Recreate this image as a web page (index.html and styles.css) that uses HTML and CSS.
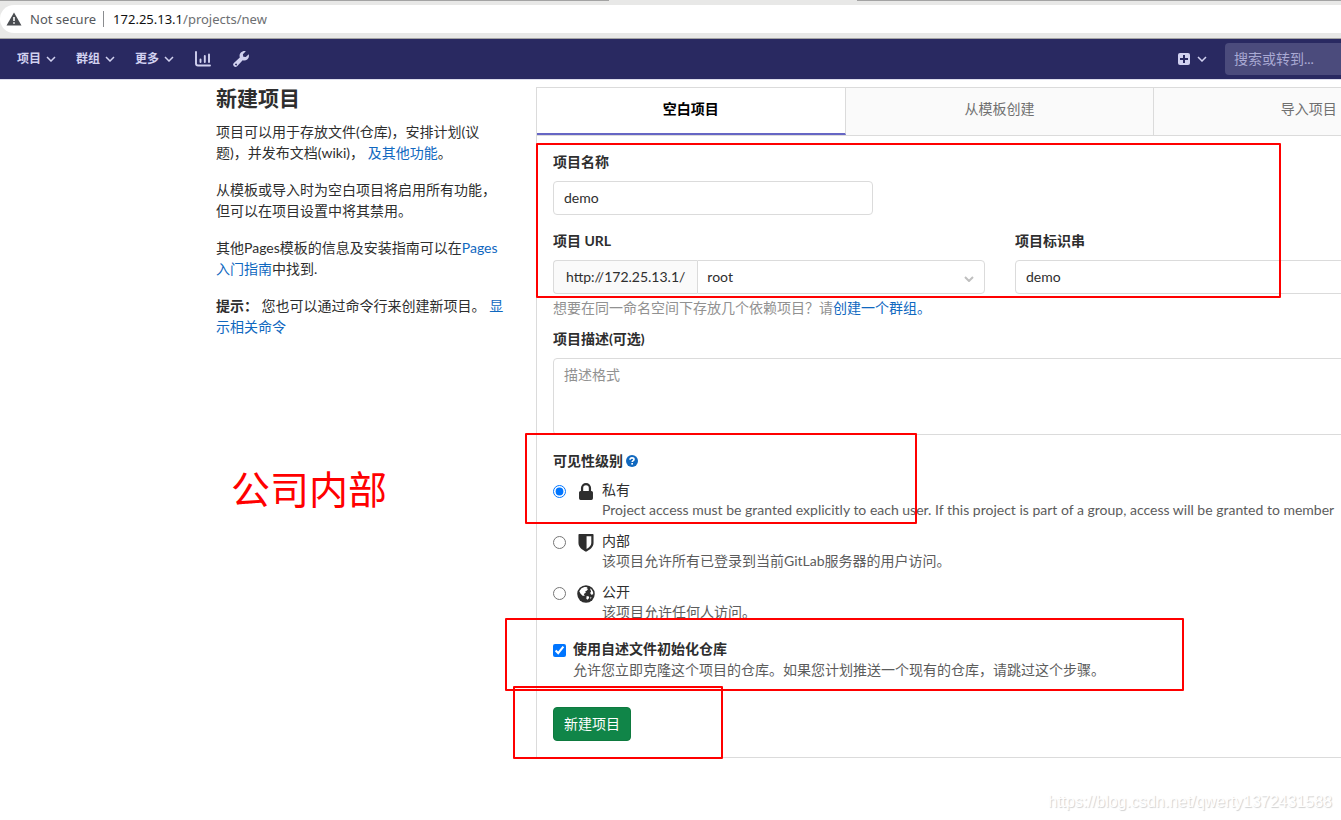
FILE: index.html
```html
<!DOCTYPE html>
<html lang="zh-CN">
<head>
<meta charset="utf-8">
<title>新建项目</title>
<link rel="stylesheet" href="styles.css">
</head>
<body>
<div class="browser-bar">
  <div class="tab-line"><span class="tab-edge tab-edge-left"></span><span class="tab-edge tab-edge-right"></span></div>
  <div class="address">
    <svg class="warn-icon" viewBox="0 0 16 14" aria-hidden="true"><path d="M8 0.5 15.5 13.5H0.5Z" fill="#4a4d51"/><path d="M7.2 5h1.6v4H7.2zM7.2 10.2h1.6v1.6H7.2z" fill="#fff"/></svg>
    <span class="not-secure">Not secure</span>
    <span class="address-sep"></span>
    <span class="url"><span class="url-host">172.25.13.1</span>/projects/new</span>
  </div>
</div>

<header class="navbar">
  <nav class="nav-left">
    <button class="nav-item" type="button">项目<svg class="chevron" viewBox="0 0 10 6" aria-hidden="true"><path d="M1 1l4 4 4-4"/></svg></button>
    <button class="nav-item" type="button">群组<svg class="chevron" viewBox="0 0 10 6" aria-hidden="true"><path d="M1 1l4 4 4-4"/></svg></button>
    <button class="nav-item" type="button">更多<svg class="chevron" viewBox="0 0 10 6" aria-hidden="true"><path d="M1 1l4 4 4-4"/></svg></button>
    <a class="nav-icon" href="#" aria-label="统计"><svg viewBox="0 0 16 16"><path d="M1 1v11.500a2 2 0 0 0 2 2H15M5.500 8.500v2.500M9.800 5v6M14 3.500v7.500" fill="none" stroke="currentColor" stroke-width="1.900" stroke-linecap="round"/></svg></a>
    <a class="nav-icon" href="#" aria-label="管理"><svg viewBox="0 0 16 16"><path fill="currentColor" fill-rule="evenodd" d="M12.800 0.300 9.900 3.200l.4 2.500 2.500.4L15.700 3.200c.7 2.200-.1 4.300-1.500 5.400-1.300 1-3 1.200-4.500.7l-5.600 5.900a2.200 2.200 0 0 1-3.200-3.200l5.900-5.600C6.200 4.500 6.700 2.700 7.900 1.600 9.200.3 11.100-.3 12.800.3zM2.500 12.700a.9.9 0 1 0 1.300 1.200.9.9 0 0 0-1.300-1.200z"/></svg></a>
  </nav>
  <div class="nav-right">
    <button class="nav-item" type="button" aria-label="新建"><svg class="plus" viewBox="0 0 12 12" aria-hidden="true"><rect width="12" height="12" rx="2" fill="#d1d1f0"/><path d="M6 2v8M2 6h8" stroke="#292961" stroke-width="2"/></svg><svg class="chevron" viewBox="0 0 10 6" aria-hidden="true"><path d="M1 1l4 4 4-4"/></svg></button>
    <input class="search" type="search" placeholder="搜索或转到..." aria-label="搜索或转到">
  </div>
</header>

<main class="page">
  <aside class="intro">
    <h1>新建项目</h1>
    <p>项目可以用于存放文件(仓库)，安排计划(议题)，并发布文档(wiki)， <a href="#">及其他功能</a>。</p>
    <p>从模板或导入时为空白项目将启用所有功能，但可以在项目设置中将其禁用。</p>
    <p>其他Pages模板的信息及安装指南可以在<a href="#">Pages入门指南</a>中找到.</p>
    <p><strong>提示：</strong> 您也可以通过命令行来创建新项目。 <a href="#">显示相关命令</a></p>
  </aside>

  <section class="panel">
    <div class="tabs" role="tablist">
      <button class="tab active" type="button" role="tab" aria-selected="true">空白项目</button>
      <button class="tab" type="button" role="tab" aria-selected="false">从模板创建</button>
      <button class="tab" type="button" role="tab" aria-selected="false">导入项目</button>
    </div>
    <form class="form">
      <div class="field">
        <label for="name">项目名称</label>
        <input class="control name-input" id="name" type="text" value="demo">
      </div>
      <div class="row">
        <div class="field">
          <label for="namespace">项目 URL</label>
          <div class="url-group">
            <span class="prefix">http://172.25.13.1/</span>
            <select class="control namespace" id="namespace"><option>root</option></select>
            <svg class="select-chevron" viewBox="0 0 10 6" aria-hidden="true"><path d="M1 1l4 4 4-4"/></svg>
          </div>
        </div>
        <div class="field">
          <label for="slug">项目标识串</label>
          <input class="control" id="slug" type="text" value="demo">
        </div>
      </div>
      <p class="hint">想要在同一命名空间下存放几个依赖项目？请<a href="#">创建一个群组。</a></p>
      <div class="field">
        <label for="desc">项目描述(可选)</label>
        <textarea class="control description" id="desc" placeholder="描述格式"></textarea>
      </div>
      <fieldset class="visibility">
        <legend>可见性级别 <a class="help" href="#" aria-label="帮助"><svg viewBox="0 0 12 12"><circle cx="6" cy="6" r="6" fill="#1068bf"/><path d="M4 4.700C4.100 3.300 5 2.900 6 2.900c1.200 0 2 .7 2 1.600C8 5.700 6.200 5.700 6.200 7.100" fill="none" stroke="#fff" stroke-width="1.600"/><rect x="5.300" y="8" width="1.700" height="1.600" fill="#fff"/></svg></a></legend>
        <div class="option">
          <input type="radio" name="visibility" id="private" checked>
          <svg class="option-icon" viewBox="0 0 16 16" aria-hidden="true"><path fill="#2e2e2e" fill-rule="evenodd" d="M3.500 7V4.500a4.500 4.500 0 0 1 9 0V7h.3A1.400 1.400 0 0 1 14.200 8.400v5.200a1.400 1.400 0 0 1-1.400 1.400H3.200A1.400 1.400 0 0 1 1.800 13.600V8.400A1.400 1.400 0 0 1 3.200 7zm2 0h5V4.500a2.500 2.500 0 0 0-5 0z"/></svg>
          <div><label for="private">私有</label><p>Project access must be granted explicitly to each user. If this project is part of a group, access will be granted to member</p></div>
        </div>
        <div class="option">
          <input type="radio" name="visibility" id="internal">
          <svg class="option-icon" viewBox="0 0 16 16" aria-hidden="true"><path fill="#2e2e2e" fill-rule="evenodd" d="M2 0h12a.7.7 0 0 1 .7.7V8c0 3.800-3.200 5.900-6.700 7.700C4.500 13.900 1.300 11.800 1.300 8V.7A.7.7 0 0 1 2 0zM8.500 2v11.300c2.500-1.500 4.200-3 4.200-5.300V2z"/></svg>
          <div><label for="internal">内部</label><p>该项目允许所有已登录到当前GitLab服务器的用户访问。</p></div>
        </div>
        <div class="option">
          <input type="radio" name="visibility" id="public">
          <svg class="option-icon" viewBox="0 0 16 16" aria-hidden="true"><circle cx="8" cy="8" r="7.800" fill="#2e2e2e"/><path fill="#fff" d="M2 5.500 4 2.900 6.600 1.800 9.500 1.700 8.400 2.600 9.800 3.600 8.600 5.200 7.400 5.600 7.800 6.800 6 8 6.900 9.600 5 9.600 3.200 7.800ZM11.500 2.800 13 3.900 14.300 6.300 14.400 8.300 12.700 8.600 11.700 7.200 12.500 5.700ZM8.600 9.800 10.600 10.200 10.800 11.600 9.300 13.200 8.300 12.300ZM12 10.500 12.900 11 11.900 12.600Z"/></svg>
          <div><label for="public">公开</label><p>该项目允许任何人访问。</p></div>
        </div>
      </fieldset>
      <div class="readme">
        <input type="checkbox" id="readme" checked>
        <div><label for="readme">使用自述文件初始化仓库</label><p>允许您立即克隆这个项目的仓库。如果您计划推送一个现有的仓库，请跳过这个步骤。</p></div>
      </div>
      <button class="submit" type="submit">新建项目</button>
    </form>
  </section>
</main>

<div class="mark mark-fields"></div>
<div class="mark mark-visibility"></div>
<div class="mark mark-readme"></div>
<div class="mark mark-submit"></div>
<div class="note">公司内部</div>
<div class="watermark">https://blog.csdn.net/qwerty1372431588</div>
</body>
</html>
```

FILE: styles.css
```css
* { box-sizing: border-box; }

body {
  position: relative;
  margin: 0;
  min-height: 100vh;
  overflow: hidden;
  background: #fff;
  color: #2e2e2e;
  font: 14px/21px Lato, "Noto Sans CJK SC", sans-serif;
}

h1, p { margin: 0; }
a { color: #1068bf; text-decoration: none; }
button, input, select, textarea { font: inherit; color: inherit; }

.browser-bar {
  background: #e8e8e7;
  border-bottom: 1px solid #a3a3a3;
  padding-bottom: 5px;
}
.tab-line { display: flex; justify-content: space-between; height: 5px; }
.tab-edge { height: 1px; background: #a3a3a3; }
.tab-edge-left { width: 609px; }
.tab-edge-right { width: 484px; }
.address {
  display: flex;
  align-items: center;
  height: 28px;
  padding-left: 6px;
  background: #fff;
  border-radius: 14px 0 0 14px;
  font-family: "Noto Sans", sans-serif;
  font-size: 13px;
  color: #6d6f72;
}
.warn-icon { width: 16px; height: 14px; }
.not-secure { margin-left: 8px; color: #55585c; }
.address-sep { width: 1px; height: 16px; margin: 0 9px 0 7px; background: #8a8c8f; }
.url-host { color: #111; }

.navbar {
  display: flex;
  justify-content: space-between;
  align-items: center;
  height: 40px;
  background: #292961;
  color: #d1d1f0;
  overflow: hidden;
}
.nav-left, .nav-right { display: flex; align-items: center; }
.nav-left { padding-left: 17px; gap: 20px; }
.nav-item {
  display: flex;
  align-items: center;
  gap: 5px;
  padding: 0;
  border: 0;
  background: none;
  font-size: 12px;
  font-weight: 700;
  line-height: 20px;
}
.chevron, .select-chevron { width: 10px; height: 6px; fill: none; stroke: currentColor; stroke-width: 2; }
.chevron { stroke-width: 1.5; }
.nav-icon { display: flex; color: #d1d1f0; }
.nav-icon svg { width: 18px; height: 16px; }
.nav-right { gap: 18px; }
.nav-right .nav-item { gap: 7px; }
.plus { width: 12px; height: 12px; }
.search {
  width: 116px;
  height: 32px;
  padding: 0 9px 2px;
  border: 0;
  border-radius: 4px 0 0 4px;
  background: #4b4b7c;
}
.search::placeholder { color: #a9a9d3; }

.page {
  display: grid;
  grid-template-columns: 290px minmax(928px, 1fr);
  gap: 30px;
  padding: 7px 0 0 216px;
  border-top: 1px solid #dcdcec;
}
.intro h1 { padding-bottom: 12px; font-size: 21px; line-height: 22px; }
.intro p { margin-bottom: 16px; }

.panel { border: 1px solid #dbdbdb; }
.tabs { display: grid; grid-template-columns: repeat(3, 1fr); border-bottom: 1px solid #dbdbdb; }
.tab {
  height: 47px;
  padding: 0 0 6px;
  border: 0;
  border-right: 1px solid #dbdbdb;
  background: #fafafa;
  color: #707070;
}
.tab:last-child { border-right: 0; }
.tab.active {
  padding: 0 0 4px;
  border-bottom: 2px solid #6666c4;
  background: #fff;
  color: #000;
  font-weight: 700;
}

.form { padding: 15px 16px 16px; }
.field label { display: block; margin-bottom: 9px; font-weight: 700; }
.control {
  display: block;
  width: 100%;
  height: 34px;
  padding: 0 10px 2px;
  border: 1px solid #dbdbdb;
  border-radius: 4px;
  background: #fff;
}
.name-input { width: 320px; }
.row { display: grid; grid-template-columns: 1fr 1fr; gap: 30px; margin-top: 15px; }
.url-group { position: relative; display: flex; height: 34px; }
.prefix {
  padding: 5px 12px;
  border: 1px solid #dbdbdb;
  border-right: 0;
  border-radius: 4px 0 0 4px;
  background: #fafafa;
}
.namespace { flex: 1; width: auto; appearance: none; border-radius: 0 4px 4px 0; padding: 0 9px 2px; }
.select-chevron { position: absolute; right: 11px; top: 16px; color: #bfbfbf; }
.hint { margin: 3px 0 10px; color: #919191; }
.description { height: 77px; padding: 5px 10px; resize: none; }
.description::placeholder { color: #919191; }

.visibility { margin: 15px 0 0; padding: 0; border: 0; min-width: 0; }
.visibility legend { padding: 0; margin-bottom: 9px; font-weight: 700; }
.help svg { width: 12px; height: 12px; vertical-align: -1px; }
.option { display: flex; align-items: flex-start; margin-bottom: 11px; line-height: 20px; white-space: nowrap; }
.option input { flex: none; margin: 5px 11px 0 0; }
.option-icon { flex: none; width: 18px; height: 18px; margin: 3px 7px 0 0; }
.option label { display: block; }
.option p, .readme p { color: #5c5c5c; }
.readme { display: flex; align-items: flex-start; margin-top: 16px; }
.visibility .option:last-child { margin-bottom: 0; }
.readme input { margin: 6px 7px 0 0; }
.readme label { display: block; font-weight: 700; }
.submit {
  display: block;
  height: 34px;
  margin-top: 27px;
  padding: 0 10px 2px;
  border: 1px solid #0e7a3f;
  border-radius: 4px;
  background: #108548;
  color: #fff;
}

/* Annotations drawn over the page */
.mark { position: absolute; border: 2px solid #f00; border-radius: 1px; }
.mark-fields { left: 536px; top: 143px; width: 745px; height: 155px; }
.mark-visibility { left: 525px; top: 433px; width: 392px; height: 91px; }
.mark-readme { left: 505px; top: 618px; width: 679px; height: 73px; }
.mark-submit { left: 513px; top: 686px; width: 210px; height: 73px; }
.note { position: absolute; left: 231px; top: 461px; color: #f00; font-size: 39px; line-height: 56px; }
.watermark {
  position: absolute;
  right: 9px;
  bottom: 8px;
  color: #fff;
  font: 16px/20px "Liberation Sans", sans-serif;
  text-shadow: 1px 1px 1px #d0d0d0;
}
```
